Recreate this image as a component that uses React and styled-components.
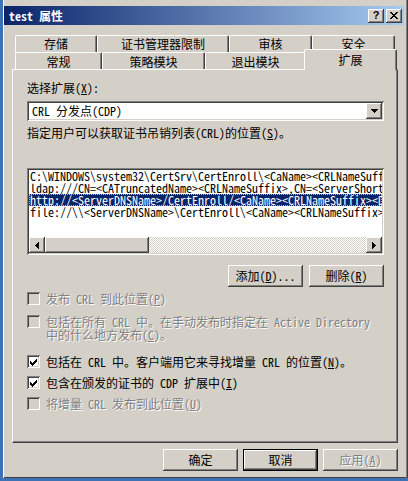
import React from "react";
import styled, { createGlobalStyle, css } from "styled-components";

const GlobalStyle = createGlobalStyle`
  html, body {
    margin: 0;
    padding: 0;
    background: #3a6ea5;
  }
  body {
    font-family: "Noto Sans Mono CJK SC", "Noto Sans CJK SC", "Liberation Mono", monospace;
    font-size: 12px;
    color: #000;
  }
`;

const raised = css`
  box-shadow: inset -1px -1px #404040, inset 1px 1px #fff, inset -2px -2px #808080, inset 2px 2px #d4d0c8;
`;

const sunken = css`
  box-shadow: inset 1px 1px #808080, inset -1px -1px #fff, inset 2px 2px #404040, inset -2px -2px #d4d0c8;
`;

const Window = styled.div`
  width: 408px;
  height: 481px;
  box-sizing: border-box;
  background: #d4d0c8;
  border-left: 3px solid #3f72b4;
  border-bottom: 3px solid #3f72b4;
  padding: 6px 4px 0 1px;
  box-shadow: inset 1px 0 #fff, inset -1px 0 #404040, inset -2px 0 #808080, inset 0 -1px #404040;
  display: flex;
  flex-direction: column;
`;

const TitleBar = styled.div`
  height: 19px;
  display: flex;
  align-items: center;
  padding: 0 2px 0 5px;
  background: linear-gradient(to right, #0a246a, #a6caf0);
`;

const Caption = styled.span`
  color: #fff;
  font-weight: bold;
  font-size: 12px;
  line-height: 12px;
`;

const CaptionButtons = styled.div`
  margin-left: auto;
  display: flex;
  gap: 2px;
`;

const CaptionButton = styled.div`
  width: 16px;
  height: 14px;
  background: #d4d0c8;
  ${raised}
  display: flex;
  align-items: center;
  justify-content: center;
  font-family: "Liberation Sans", sans-serif;
  font-weight: bold;
  font-size: 11px;
  line-height: 11px;
  padding-bottom: 1px;
  box-sizing: border-box;
`;

const Body = styled.div`
  display: flex;
  flex-direction: column;
  padding-left: 8px;
  margin-top: 10px;
`;

const TabStrip = styled.div`
  margin-left: 3px;
  width: 380px;
`;

const TabRow = styled.div`
  display: flex;
  align-items: flex-end;
  height: 17px;
`;

const Tab = styled.div`
  width: ${(p) => p.$w}px;
  height: ${(p) => (p.$active ? 21 : 17)}px;
  box-sizing: border-box;
  flex-shrink: 0;
  background: #d4d0c8;
  border-top: 1px solid #fff;
  border-left: 1px solid #fff;
  border-right: 1px solid #404040;
  border-radius: 2px 2px 0 0;
  box-shadow: inset -1px 0 #808080;
  text-align: center;
  line-height: 12px;
  padding-top: ${(p) => (p.$active ? 4 : p.$back ? 2 : 3)}px;
  ${(p) =>
    p.$active &&
    css`
      position: relative;
      top: 1px;
      margin: 0 -2px;
      width: ${p.$w + 4}px;
      z-index: 2;
    `}
`;

const Panel = styled.div`
  width: 386px;
  height: 374px;
  box-sizing: border-box;
  border-top: 1px solid #fff;
  border-left: 1px solid #fff;
  border-right: 1px solid #404040;
  border-bottom: 1px solid #404040;
  box-shadow: inset -1px -1px #808080;
  padding: 12px 13px 0 14px;
  display: flex;
  flex-direction: column;
`;

const Label = styled.div`
  line-height: 12px;
  margin-top: ${(p) => p.$mt || 0}px;
  white-space: nowrap;
`;

const Combo = styled.div`
  margin-top: 7px;
  height: 20px;
  background: #fff;
  ${sunken}
  display: flex;
  align-items: center;
  padding: 2px 2px 2px 5px;
  box-sizing: border-box;
  line-height: 12px;
`;

const DropButton = styled.div`
  margin-left: auto;
  width: 16px;
  height: 16px;
  background: #d4d0c8;
  ${raised}
  display: flex;
  align-items: center;
  justify-content: center;
`;

const ListBox = styled.div`
  margin-top: 29px;
  height: 87px;
  background: #fff;
  ${sunken}
  padding: 2px;
  box-sizing: border-box;
  display: flex;
  flex-direction: column;
  overflow: hidden;
`;

const ListItem = styled.div`
  line-height: 12px;
  height: 12px;
  white-space: nowrap;
  overflow: hidden;
  padding-left: 1px;
  ${(p) =>
    p.$selected &&
    css`
      background: #0a246a;
      color: #fff;
      outline: 1px dotted #a6b4d8;
      outline-offset: -1px;
    `}
`;

const HScroll = styled.div`
  margin-top: auto;
  height: 16px;
  display: flex;
  flex-shrink: 0;
`;

const ScrollArrow = styled.div`
  width: 16px;
  height: 16px;
  background: #d4d0c8;
  ${raised}
  display: flex;
  align-items: center;
  justify-content: center;
  flex-shrink: 0;
`;

const Track = styled.div`
  flex: 1;
  background: repeating-conic-gradient(#fff 0 25%, #d4d0c8 0 50%) 0 0 / 2px 2px;
`;

const Thumb = styled.div`
  width: ${(p) => p.$w}px;
  height: 16px;
  background: #d4d0c8;
  ${raised}
`;

const ButtonRow = styled.div`
  display: flex;
  justify-content: flex-end;
  gap: ${(p) => p.$gap}px;
  margin-top: ${(p) => p.$mt}px;
`;

const PushButton = styled.div`
  width: 75px;
  height: 22px;
  box-sizing: border-box;
  background: #d4d0c8;
  ${raised}
  display: flex;
  align-items: center;
  justify-content: center;
  line-height: 12px;
  white-space: nowrap;
  ${(p) =>
    p.$default &&
    css`
      border: 1px solid #000;
    `}
  ${(p) =>
    p.$disabled &&
    css`
      color: #808080;
      text-shadow: 1px 1px 0 #fff;
    `}
`;

const CheckRow = styled.div`
  display: flex;
  align-items: flex-start;
  gap: 6px;
  margin-top: ${(p) => p.$mt}px;
  ${(p) =>
    p.$disabled &&
    css`
      color: #808080;
      text-shadow: 1px 1px 0 #fff;
    `}
`;

const Box = styled.div`
  width: 13px;
  height: 13px;
  flex-shrink: 0;
  background: ${(p) => (p.$disabled ? "#d4d0c8" : "#fff")};
  ${sunken}
`;

const CheckText = styled.div`
  line-height: 13px;
  white-space: nowrap;
`;

const Footer = styled.div`
  width: 386px;
  display: flex;
  justify-content: flex-end;
  gap: 5px;
  margin-top: 6px;
`;

const Arrow = ({ dir }) => {
  const paths = {
    down: "M0 0h7v1H0zM1 1h5v1H1zM2 2h3v1H2zM3 3h1v1H3z",
    left: "M3 0h1v7H3zM2 1h1v5H2zM1 2h1v3H1zM0 3h1v1H0z",
    right: "M0 0h1v7H0zM1 1h1v5H1zM2 2h1v3H2zM3 3h1v1H3z",
  };
  const size = dir === "down" ? [7, 4] : [4, 7];
  return (
    <svg width={size[0]} height={size[1]} viewBox={`0 0 ${size[0]} ${size[1]}`} shapeRendering="crispEdges">
      <path d={paths[dir]} fill="#000" />
    </svg>
  );
};

const CloseGlyph = () => (
  <svg width="8" height="7" viewBox="0 0 8 7" shapeRendering="crispEdges">
    <path
      d="M0 0h2v1H0zM6 0h2v1H6zM1 1h2v1H1zM5 1h2v1H5zM2 2h4v1H2zM3 3h2v1H3zM2 4h4v1H2zM1 5h2v1H1zM5 5h2v1H5zM0 6h2v1H0zM6 6h2v1H6z"
      fill="#000"
    />
  </svg>
);

const CheckBox = ({ checked, disabled }) => (
  <Box $disabled={disabled}>
    {checked && (
      <svg width="13" height="13" viewBox="0 0 13 13" shapeRendering="crispEdges">
        <path
          d="M9 3h1v1H9zM8 4h2v1H8zM3 5h1v1H3zM7 5h3v1H7zM3 6h2v1H3zM6 6h3v1H6zM3 7h5v1H3zM4 8h3v1H4zM5 9h1v1H5z"
          fill="#000"
        />
      </svg>
    )}
  </Box>
);

const locations = [
  "C:\\WINDOWS\\system32\\CertSrv\\CertEnroll\\<CaName><CRLNameSuffix><DeltaCRLAllowed>.crl",
  "ldap:///CN=<CATruncatedName><CRLNameSuffix>,CN=<ServerShortName>,CN=CDP,CN=Public Key Services,CN=Services,<ConfigurationContainer><CDPObjectClass>",
  "http://<ServerDNSName>/CertEnroll/<CaName><CRLNameSuffix><DeltaCRLAllowed>.crl",
  "file://\\\\<ServerDNSName>\\CertEnroll\\<CaName><CRLNameSuffix><DeltaCRLAllowed>.crl",
];

export default function App() {
  return (
    <>
      <GlobalStyle />
      <Window>
        <TitleBar>
          <Caption>test 属性</Caption>
          <CaptionButtons>
            <CaptionButton>?</CaptionButton>
            <CaptionButton>
              <CloseGlyph />
            </CaptionButton>
          </CaptionButtons>
        </TitleBar>

        <Body>
          <TabStrip>
            <TabRow>
              <Tab $w={82} $back>存储</Tab>
              <Tab $w={132} $back>证书管理器限制</Tab>
              <Tab $w={83} $back>审核</Tab>
              <Tab $w={83} $back>安全</Tab>
            </TabRow>
            <TabRow>
              <Tab $w={87}>常规</Tab>
              <Tab $w={103}>策略模块</Tab>
              <Tab $w={101}>退出模块</Tab>
              <Tab $w={89} $active>扩展</Tab>
            </TabRow>
          </TabStrip>

          <Panel>
            <Label>
              选择扩展(<u>X</u>):
            </Label>
            <Combo>
              CRL 分发点(CDP)
              <DropButton>
                <Arrow dir="down" />
              </DropButton>
            </Combo>
            <Label $mt={6}>
              指定用户可以获取证书吊销列表(CRL)的位置(<u>S</u>)。
            </Label>

            <ListBox>
              {locations.map((loc, i) => (
                <ListItem key={i} $selected={i === 2}>
                  {loc}
                </ListItem>
              ))}
              <HScroll>
                <ScrollArrow>
                  <Arrow dir="left" />
                </ScrollArrow>
                <Thumb $w={104} />
                <Track />
                <ScrollArrow>
                  <Arrow dir="right" />
                </ScrollArrow>
              </HScroll>
            </ListBox>

            <ButtonRow $gap={6} $mt={10}>
              <PushButton>
                添加(<u>D</u>)...
              </PushButton>
              <PushButton>
                删除(<u>R</u>)
              </PushButton>
            </ButtonRow>

            <CheckRow $mt={5} $disabled>
              <CheckBox disabled />
              <CheckText>
                发布 CRL 到此位置(<u>P</u>)
              </CheckText>
            </CheckRow>
            <CheckRow $mt={10} $disabled>
              <CheckBox disabled />
              <CheckText>
                包括在所有 CRL 中。在手动发布时指定在 Active Directory
                <br />
                中的什么地方发布(<u>C</u>)。
              </CheckText>
            </CheckRow>
            <CheckRow $mt={14}>
              <CheckBox checked />
              <CheckText>
                包括在 CRL 中。客户端用它来寻找增量 CRL 的位置(<u>N</u>)。
              </CheckText>
            </CheckRow>
            <CheckRow $mt={8}>
              <CheckBox checked />
              <CheckText>
                包含在颁发的证书的 CDP 扩展中(<u>I</u>)
              </CheckText>
            </CheckRow>
            <CheckRow $mt={8} $disabled>
              <CheckBox disabled />
              <CheckText>
                将增量 CRL 发布到此位置(<u>U</u>)
              </CheckText>
            </CheckRow>
          </Panel>

          <Footer>
            <PushButton>确定</PushButton>
            <PushButton $default>取消</PushButton>
            <PushButton $disabled>
              应用(<u>A</u>)
            </PushButton>
          </Footer>
        </Body>
      </Window>
    </>
  );
}
